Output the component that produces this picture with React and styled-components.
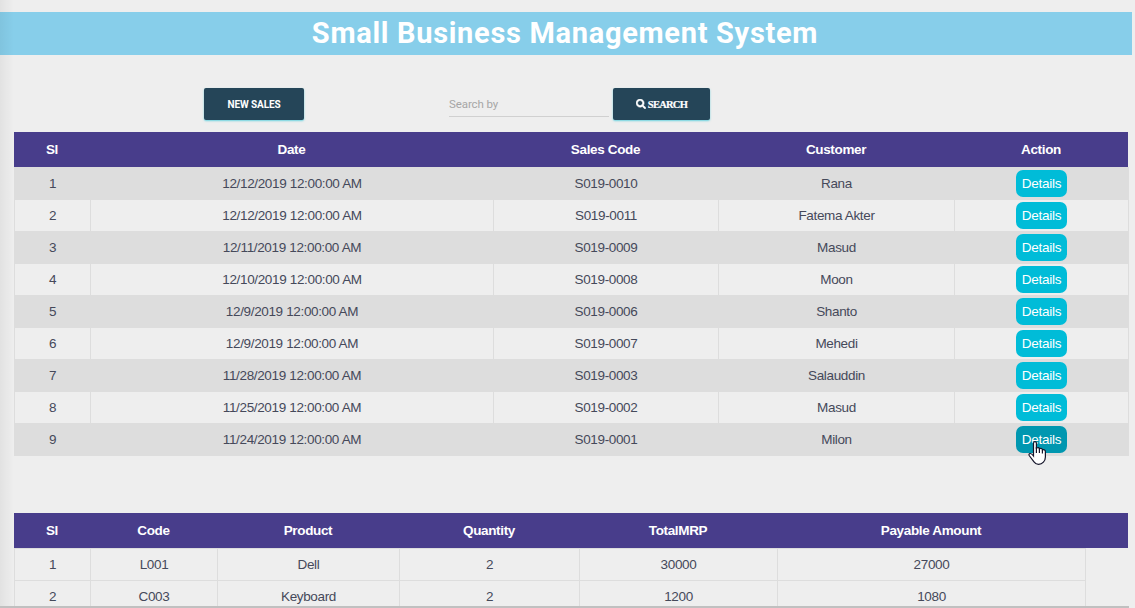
import React from "react";
import styled, { createGlobalStyle } from "styled-components";
import { FaSearch } from "react-icons/fa";

const GlobalStyle = createGlobalStyle`
  * { box-sizing: border-box; }
  body {
    margin: 0;
    background: #eeeeee;
    font-family: "Liberation Sans", Arial, sans-serif;
    font-size: 13.5px;
    letter-spacing: -0.35px;
    color: #45495a;
  }
`;

const Page = styled.div`
  position: relative;
  height: 608px;
  overflow: hidden;
  padding-top: 12px;
`;

const EdgeShade = styled.div`
  position: absolute;
  inset: 0 auto 0 0;
  width: 14px;
  background: linear-gradient(to right, rgba(0, 0, 0, 0.05), rgba(0, 0, 0, 0));
`;

const Banner = styled.h1`
  margin: 0 3px 0 0;
  height: 43px;
  padding-right: 2px;
  background: #87ceea;
  color: #fff;
  font: 700 29px/42px Roboto, sans-serif;
  letter-spacing: 0.69px;
  text-align: center;
`;

const Toolbar = styled.div`
  display: flex;
  height: 77px;
  padding: 33px 0 0 204px;
`;

const ToolButton = styled.button`
  display: flex;
  align-items: center;
  justify-content: center;
  width: ${(p) => p.$width}px;
  height: 32px;
  padding: 0;
  border: 0;
  border-radius: 2px;
  background: #254558;
  box-shadow: 0 1px 2px rgba(0, 188, 212, 0.55);
  color: #fff;
  font: 700 10px Roboto, sans-serif;
  letter-spacing: -0.1px;
`;

const SearchIcon = styled(FaSearch)`
  stroke: #fff;
  stroke-width: 28px;
`;

const SearchLabel = styled.span`
  margin-left: 2px;
  font-family: "Liberation Serif", serif;
  font-size: 10.5px;
  letter-spacing: -0.75px;
  -webkit-text-stroke: 0.2px #fff;
`;

const SearchInput = styled.input`
  width: 160px;
  height: 29px;
  margin: 0 4px 0 145px;
  padding: 4px 0 0;
  border: 0;
  border-bottom: 1px solid #d0d0d0;
  background: transparent;
  font: 11.5px Roboto, sans-serif;
  letter-spacing: -0.1px;
  &::placeholder { color: #a6a6a6; opacity: 1; }
`;

const Table = styled.section`
  width: 1115px;
  margin: 0 0 ${(p) => p.$gap || 0}px 14px;
`;

const HeadRow = styled.div`
  display: grid;
  grid-template-columns: ${(p) => p.$cols};
  width: 1114px;
  height: 35px;
  background: #483d8b;
  color: #fff;
  font-weight: 700;
  line-height: 35px;
  text-align: center;
`;

const Body = styled.div`
  width: max-content;
  border-right: 1px solid #dddddd;
  border-bottom: 1px solid #dddddd;
`;

const Row = styled.div`
  display: grid;
  grid-template-columns: ${(p) => p.$cols};
  height: 32px;
  background: ${(p) => (p.$shaded ? "#dddddd" : "transparent")};
`;

const Cell = styled.div`
  display: flex;
  align-items: center;
  justify-content: center;
  border: solid #dddddd;
  border-width: 1px 0 0 1px;
`;

const DetailsButton = styled.button`
  width: 51px;
  height: 27px;
  padding: 0;
  border: 0;
  border-radius: 7px;
  background: ${(p) => (p.$hovered ? "#0097b0" : "#00bcd8")};
  color: #fff;
  font: 13.5px "Liberation Sans", Arial, sans-serif;
  letter-spacing: -0.25px;
`;

const BottomBar = styled.div`
  position: absolute;
  left: 0;
  bottom: 0;
  width: 1129px;
  height: 2px;
  background: #c0c0c0;
`;

const Pointer = styled.svg`
  position: absolute;
  left: 1028px;
  top: 441px;
`;

const salesCols = "76px 403px 225px 236px 174px";
const itemCols = "76px 127px 182px 180px 198px 308px";

const sales = [
  ["12/12/2019", "S019-0010", "Rana"],
  ["12/12/2019", "S019-0011", "Fatema Akter"],
  ["12/11/2019", "S019-0009", "Masud"],
  ["12/10/2019", "S019-0008", "Moon"],
  ["12/9/2019", "S019-0006", "Shanto"],
  ["12/9/2019", "S019-0007", "Mehedi"],
  ["11/28/2019", "S019-0003", "Salauddin"],
  ["11/25/2019", "S019-0002", "Masud"],
  ["11/24/2019", "S019-0001", "Milon"],
];

const items = [
  ["1", "L001", "Dell", "2", "30000", "27000"],
  ["2", "C003", "Keyboard", "2", "1200", "1080"],
];

const Head = ({ cols, labels }) => (
  <HeadRow $cols={cols}>
    {labels.map((label) => (
      <span key={label}>{label}</span>
    ))}
  </HeadRow>
);

export default function App() {
  return (
    <Page>
      <GlobalStyle />
      <Banner>Small Business Management System</Banner>
      <Toolbar>
        <ToolButton $width={100}>NEW SALES</ToolButton>
        <SearchInput placeholder="Search by" />
        <ToolButton $width={97}>
          <SearchIcon size={10} />
          <SearchLabel>SEARCH</SearchLabel>
        </ToolButton>
      </Toolbar>
      <Table $gap={57}>
        <Head cols={salesCols} labels={["Sl", "Date", "Sales Code", "Customer", "Action"]} />
        <Body>
          {sales.map(([date, code, customer], i) => (
            <Row key={code} $cols={salesCols} $shaded={i % 2 === 0}>
              <Cell>{i + 1}</Cell>
              <Cell>{date} 12:00:00 AM</Cell>
              <Cell>{code}</Cell>
              <Cell>{customer}</Cell>
              <Cell>
                <DetailsButton $hovered={i === sales.length - 1}>Details</DetailsButton>
              </Cell>
            </Row>
          ))}
        </Body>
      </Table>
      <Table>
        <Head
          cols={itemCols}
          labels={["Sl", "Code", "Product", "Quantity", "TotalMRP", "Payable Amount"]}
        />
        <Body>
          {items.map((item) => (
            <Row key={item[0]} $cols={itemCols}>
              {item.map((value, c) => (
                <Cell key={c}>{value}</Cell>
              ))}
            </Row>
          ))}
        </Body>
      </Table>
      <EdgeShade />
      <BottomBar />
      <Pointer width="19" height="25" viewBox="0 0 19 25">
        <path
          d="M5.5 15V2.2Q5.5 .7 7 .7Q8.4 .7 8.4 2.2V7Q11 5.8 11.4 7.8Q14 6.8 14.4 8.8Q17.4 8 17.4 11V16Q17.4 19 15.4 21.2Q13.5 23.3 10.5 23.3Q7.8 23.3 6 20.8L1.2 14.5Q.4 12.8 2.2 12.5Q3.4 12.3 5.5 15Z"
          fill="#fff"
          stroke="#15152a"
          strokeWidth="1.2"
        />
        <path d="M8.4 6V12M11.4 7.8V12M14.4 8.8V12.5" stroke="#15152a" strokeWidth="1.2" />
      </Pointer>
    </Page>
  );
}
